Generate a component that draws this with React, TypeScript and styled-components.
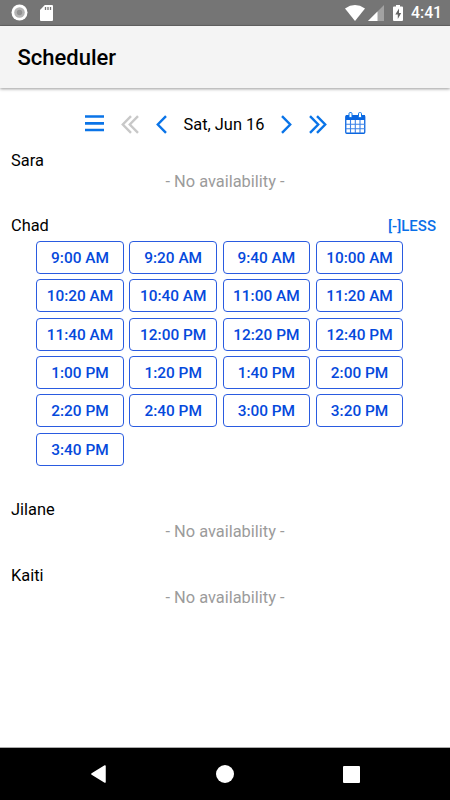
import React from "react";
import styled, { createGlobalStyle } from "styled-components";

const GlobalStyle = createGlobalStyle`
  * { box-sizing: border-box; }
  body { margin: 0; background: #fff; font-family: Roboto, "Liberation Sans", sans-serif; }
  button { font-family: inherit; }
`;

const Screen = styled.div`
  display: flex;
  flex-direction: column;
  width: 450px;
  height: 800px;
  overflow: hidden;
  background: #fff;
  color: #000;
`;

const StatusBar = styled.div`
  display: flex;
  flex: none;
  align-items: center;
  justify-content: space-between;
  height: 26px;
  padding: 0 9px 0 11px;
  background: #757575;
  border-bottom: 1px solid #666;
  color: #fff;
`;

const StatusGroup = styled.div<{ $gap: number }>`
  display: flex;
  align-items: center;
  gap: ${(p) => p.$gap}px;
  height: 26px;
`;

const Clock = styled.span`
  width: 30px;
  margin-left: 5px;
  font-size: 15.8px;
  font-weight: 500;
  line-height: 26px;
  white-space: nowrap;
  padding-top: 1px;
`;

const Header = styled.header`
  flex: none;
  height: 62px;
  padding-left: 17.5px;
  background: #f4f4f4;
  box-shadow: 0 1px 3px rgba(0, 0, 0, 0.4);
`;

const Title = styled.h1`
  margin: 0;
  font-size: 22px;
  font-weight: 500;
  line-height: 64px;
`;

const DateNav = styled.nav`
  display: flex;
  flex: none;
  align-items: center;
  height: 54px;
  margin-top: 9px;
  padding-left: 85px;
`;

const NavButton = styled.button<{ $gap: number; $muted?: boolean }>`
  display: flex;
  flex: none;
  margin: 0 0 0 ${(p) => p.$gap}px;
  padding: 0;
  border: 0;
  background: none;
  color: ${(p) => (p.$muted ? "#c8c8c8" : "#0a74e8")};
`;

const CurrentDate = styled.span`
  width: 81px;
  margin-left: 16.5px;
  padding-top: 2px;
  font-size: 16.4px;
  line-height: 22px;
  white-space: nowrap;
`;

const Schedule = styled.main`
  flex: 1;
  min-height: 0;
  margin-top: -2px;
`;

const Person = styled.section`
  padding: 0 14px 0 11px;
  height: 65.6px;
`;

const OpenPerson = styled(Person)`
  height: 284.4px;
`;

const PersonHead = styled.div`
  display: flex;
  justify-content: space-between;
  align-items: center;
  height: 22px;
`;

const Name = styled.span`
  font-size: 16.4px;
`;

const Empty = styled.div`
  height: 22px;
  padding-left: 154.5px;
  font-size: 16.4px;
  line-height: 22px;
  color: #9b9b9b;
  white-space: nowrap;
`;

const Toggle = styled.button`
  padding: 0;
  border: 0;
  background: none;
  color: #0a6fe8;
  font-size: 15px;
  font-weight: 500;
`;

const Slots = styled.div`
  display: grid;
  grid-template-columns: repeat(4, 87.6px);
  grid-auto-rows: 33px;
  gap: 5.4px 5.6px;
  margin: 4.2px 0 0 25.2px;
`;

const Slot = styled.button`
  padding: 1px 0 0;
  border: 1px solid #2a5be0;
  border-radius: 4px;
  background: #fff;
  color: #0549dc;
  font-size: 15.4px;
  font-weight: 500;
  white-space: nowrap;
`;

const SystemNav = styled.footer`
  display: flex;
  flex: none;
  align-items: center;
  justify-content: space-between;
  height: 53px;
  padding: 0 90px;
  border-top: 1px solid #aaa;
  background: #000;
  color: #fff;
`;

const times = [
  "9:00 AM", "9:20 AM", "9:40 AM", "10:00 AM",
  "10:20 AM", "10:40 AM", "11:00 AM", "11:20 AM",
  "11:40 AM", "12:00 PM", "12:20 PM", "12:40 PM",
  "1:00 PM", "1:20 PM", "1:40 PM", "2:00 PM",
  "2:20 PM", "2:40 PM", "3:00 PM", "3:20 PM",
  "3:40 PM",
];

function Chevron({ double, right }: { double?: boolean; right?: boolean }) {
  const w = double ? 18 : 11;
  return (
    <svg width={w} height="19" viewBox={`0 0 ${w} 19`} fill="none" stroke="currentColor" strokeWidth="2.4">
      <g transform={right ? `translate(${w} 0) scale(-1 1)` : undefined}>
        <path d="M10 1.2 1.8 9.5 10 17.8" />
        {double && <path d="M17 1.2 8.8 9.5 17 17.8" />}
      </g>
    </svg>
  );
}

function CalendarIcon() {
  return (
    <svg width="21" height="24" viewBox="0 0 21 24">
      <path d="M1 3h19v5H1z" fill="#0a66e0" />
      <rect x=".75" y="3.75" width="19" height="17.5" rx="1" fill="none" stroke="#0a66e0" strokeWidth="1.3" />
      <path d="M1 12.3h19M1 16.7h19M5.5 8v13M10.3 8v13M15 8v13" stroke="#3c82e8" strokeWidth="1.1" />
      <rect x="4" y=".6" width="3" height="5" rx="1" fill="#fff" stroke="#0a74e8" />
      <rect x="13.5" y=".6" width="3" height="5" rx="1" fill="#fff" stroke="#0a74e8" />
    </svg>
  );
}

export default function App() {
  return (
    <>
      <GlobalStyle />
      <Screen>
        <StatusBar>
          <StatusGroup $gap={12}>
            <svg width="17" height="17" viewBox="0 0 17 17">
              <circle cx="8.5" cy="8.5" r="8" fill="#fff" />
              <circle cx="8.5" cy="8.5" r="5.3" fill="#b4b4b4" />
              <circle cx="8.5" cy="8.5" r="2.7" fill="#929292" />
            </svg>
            <svg width="13" height="16" viewBox="0 0 13 16">
              <path d="M4.8 0H12q1 0 1 1v14q0 1-1 1H1q-1 0-1-1V5z" fill="#fff" />
              <path d="M5.5 2v3M8 2v3M10.5 2v3" stroke="#757575" strokeWidth="1.3" />
            </svg>
          </StatusGroup>
          <StatusGroup $gap={3}>
            <svg width="20" height="16" viewBox="0 0 20 16">
              <path d="M0 3.4Q10-3.4 20 3.4L10 16z" fill="#fff" />
            </svg>
            <svg width="16" height="16" viewBox="0 0 16 16">
              <path d="M16 0v16H0z" fill="#a2a2a2" />
              <path d="M9.5 6.5V16H0z" fill="#fff" />
            </svg>
            <svg width="16" height="16" viewBox="0 0 16 16">
              <path d="M9 0h4v1.5h2q1 0 1 1V15q0 1-1 1H7q-1 0-1-1V2.5q0-1 1-1h2z" fill="#fff" />
              <path d="M12 3.5 8.3 9.5h2.5V14l3.4-6H12z" fill="#666" />
            </svg>
            <Clock>4:41</Clock>
          </StatusGroup>
        </StatusBar>
        <Header>
          <Title>Scheduler</Title>
        </Header>
        <DateNav>
          <NavButton $gap={0} aria-label="Menu">
            <svg width="19" height="19" viewBox="0 0 19 19">
              <path d="M0 1.5h19M0 8.3h19M0 15h19" stroke="currentColor" strokeWidth="2.7" />
            </svg>
          </NavButton>
          <NavButton $gap={17} $muted aria-label="Previous week"><Chevron double /></NavButton>
          <NavButton $gap={17} aria-label="Previous day"><Chevron /></NavButton>
          <CurrentDate>Sat, Jun 16</CurrentDate>
          <NavButton $gap={16.5} aria-label="Next day"><Chevron right /></NavButton>
          <NavButton $gap={17} aria-label="Next week"><Chevron double right /></NavButton>
          <NavButton $gap={18} aria-label="Choose date"><CalendarIcon /></NavButton>
        </DateNav>
        <Schedule>
          <Person>
            <PersonHead><Name>Sara</Name></PersonHead>
            <Empty>- No availability -</Empty>
          </Person>
          <OpenPerson>
            <PersonHead><Name>Chad</Name><Toggle>[-]LESS</Toggle></PersonHead>
            <Slots>{times.map((time) => <Slot key={time}>{time}</Slot>)}</Slots>
          </OpenPerson>
          {["Jilane", "Kaiti"].map((name) => (
            <Person key={name}>
              <PersonHead><Name>{name}</Name></PersonHead>
              <Empty>- No availability -</Empty>
            </Person>
          ))}
        </Schedule>
        <SystemNav>
          <svg width="17" height="18" viewBox="0 0 17 18">
            <path d="M15 1 2 9l13 8z" fill="currentColor" stroke="currentColor" strokeWidth="1.5" strokeLinejoin="round" />
          </svg>
          <svg width="18" height="18" viewBox="0 0 18 18"><circle cx="9" cy="9" r="9" fill="currentColor" /></svg>
          <svg width="17" height="17" viewBox="0 0 17 17"><rect width="17" height="17" rx="1" fill="currentColor" /></svg>
        </SystemNav>
      </Screen>
    </>
  );
}
